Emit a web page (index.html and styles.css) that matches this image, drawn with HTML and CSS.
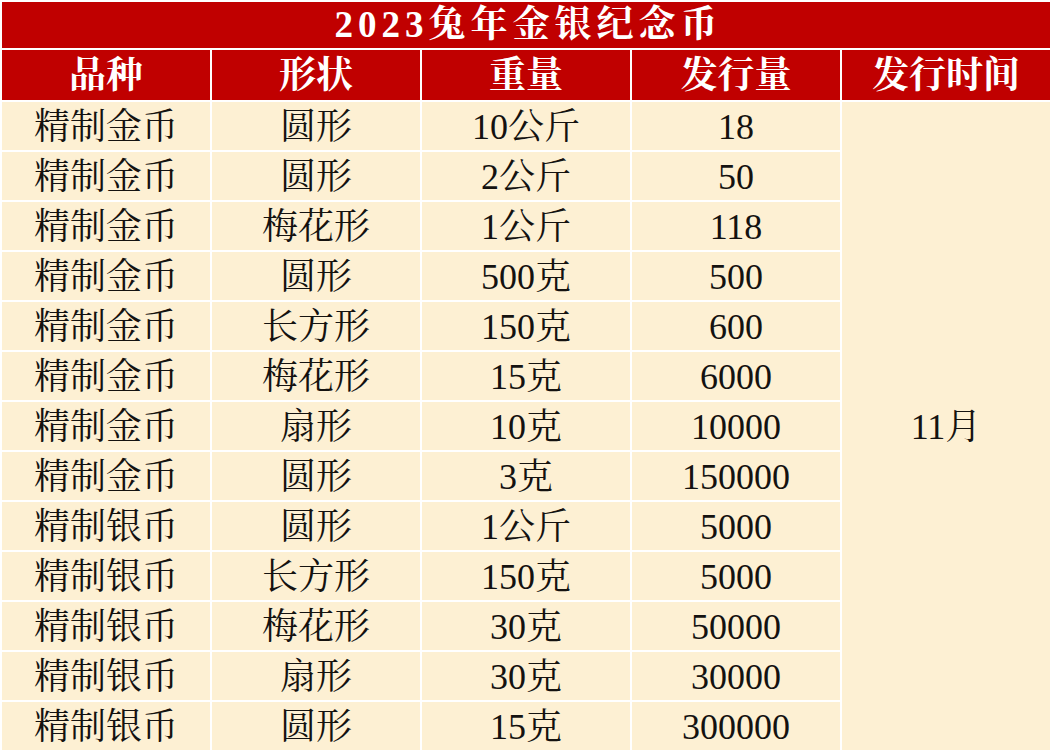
FILE: index.html
```html
<!DOCTYPE html>
<html lang="zh-CN">
<head>
<meta charset="utf-8">
<title>2023兔年金银纪念币</title>
<link rel="stylesheet" href="styles.css">
</head>
<body>
<table class="coins">
  <thead>
    <tr class="title-row"><th colspan="5" class="title">2023兔年金银纪念币</th></tr>
    <tr class="head-row">
      <th>品种</th><th>形状</th><th>重量</th><th>发行量</th><th>发行时间</th>
    </tr>
  </thead>
  <tbody>
    <tr><td>精制金币</td><td>圆形</td><td>10公斤</td><td>18</td><td rowspan="13" class="date">11月</td></tr>
    <tr><td>精制金币</td><td>圆形</td><td>2公斤</td><td>50</td></tr>
    <tr><td>精制金币</td><td>梅花形</td><td>1公斤</td><td>118</td></tr>
    <tr><td>精制金币</td><td>圆形</td><td>500克</td><td>500</td></tr>
    <tr><td>精制金币</td><td>长方形</td><td>150克</td><td>600</td></tr>
    <tr><td>精制金币</td><td>梅花形</td><td>15克</td><td>6000</td></tr>
    <tr><td>精制金币</td><td>扇形</td><td>10克</td><td>10000</td></tr>
    <tr><td>精制金币</td><td>圆形</td><td>3克</td><td>150000</td></tr>
    <tr><td>精制银币</td><td>圆形</td><td>1公斤</td><td>5000</td></tr>
    <tr><td>精制银币</td><td>长方形</td><td>150克</td><td>5000</td></tr>
    <tr><td>精制银币</td><td>梅花形</td><td>30克</td><td>50000</td></tr>
    <tr><td>精制银币</td><td>扇形</td><td>30克</td><td>30000</td></tr>
    <tr><td>精制银币</td><td>圆形</td><td>15克</td><td>300000</td></tr>
  </tbody>
</table>
</body>
</html>
```

FILE: styles.css
```css
html, body {
  margin: 0;
  padding: 0;
  background: #ffffff;
}

.coins {
  width: 1052px;
  border-collapse: separate;
  border-spacing: 2px;
  table-layout: fixed;
  font-family: "Liberation Serif", "Noto Serif CJK SC", "Noto Sans CJK SC", serif;
  color: #141210;
}

.coins th,
.coins td {
  padding: 0;
  text-align: center;
  vertical-align: middle;
}

.title-row .title {
  height: 46px;
  background: #c00000;
  color: #ffffff;
  font-size: 37px;
  font-weight: bold;
  letter-spacing: 5px;
  padding-left: 5px;
  line-height: 46px;
}

.head-row th {
  height: 48px;
  padding-top: 2px;
  background: #c00000;
  color: #ffffff;
  font-size: 37px;
  font-weight: bold;
  line-height: 48px;
}

.coins td {
  height: 46px;
  padding-top: 2px;
  background: #fdf0d3;
  font-size: 36px;
  line-height: 46px;
}

.coins td.date {
  background: #fdf0d3;
}
```
